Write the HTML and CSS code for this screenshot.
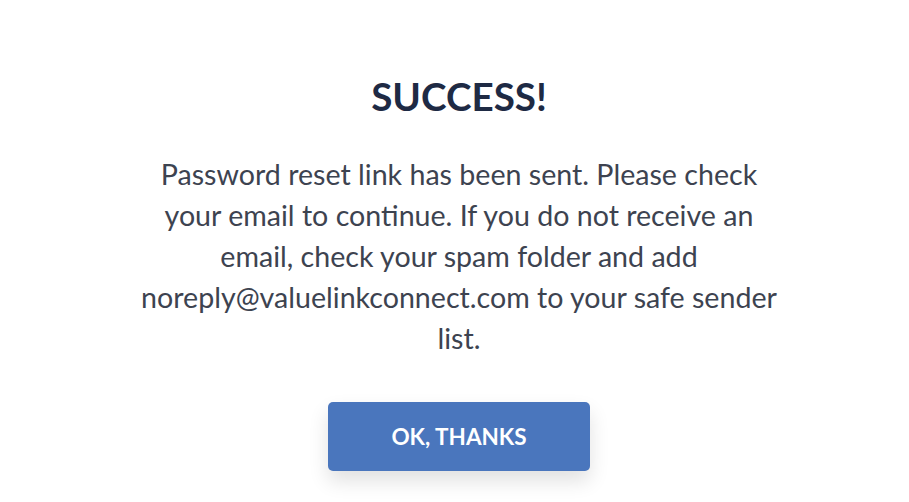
FILE: index.html
```html
<!DOCTYPE html>
<html>
<head>
<meta charset="utf-8">
<link rel="stylesheet" href="styles.css">
</head>
<body>
<main class="dialog">
  <h1 class="title">SUCCESS!</h1>
  <p class="message">Password reset link has been sent. Please check your email to continue. If you do not receive an email, check your spam folder and add noreply@valuelinkconnect.com to your safe sender list.</p>
  <button class="btn">OK, THANKS</button>
</main>
</body>
</html>
```
FILE: styles.css
```css
html, body {
  margin: 0;
  padding: 0;
  background: #ffffff;
}
body {
  font-family: Lato, "Open Sans", sans-serif;
  width: 909px;
  height: 502px;
  overflow: hidden;
}
.dialog {
  display: flex;
  flex-direction: column;
  align-items: center;
  padding: 74px 0 0 9px;
}
.title {
  margin: 0;
  font-size: 38.6px;
  font-weight: 700;
  color: #1e2a44;
  line-height: 44px;
}
.message {
  margin: 36px 0 0;
  width: 645px;
  text-align: center;
  font-size: 28.6px;
  line-height: 41px;
  color: #3d4350;
}
.btn {
  margin-top: 43px;
  width: 262px;
  height: 69px;
  border: none;
  border-radius: 5px;
  background: #4a76bd;
  color: #ffffff;
  font-family: Lato, sans-serif;
  font-weight: 700;
  font-size: 22.5px;
  box-shadow: 0 10px 20px rgba(0, 0, 0, 0.12);
}
```
